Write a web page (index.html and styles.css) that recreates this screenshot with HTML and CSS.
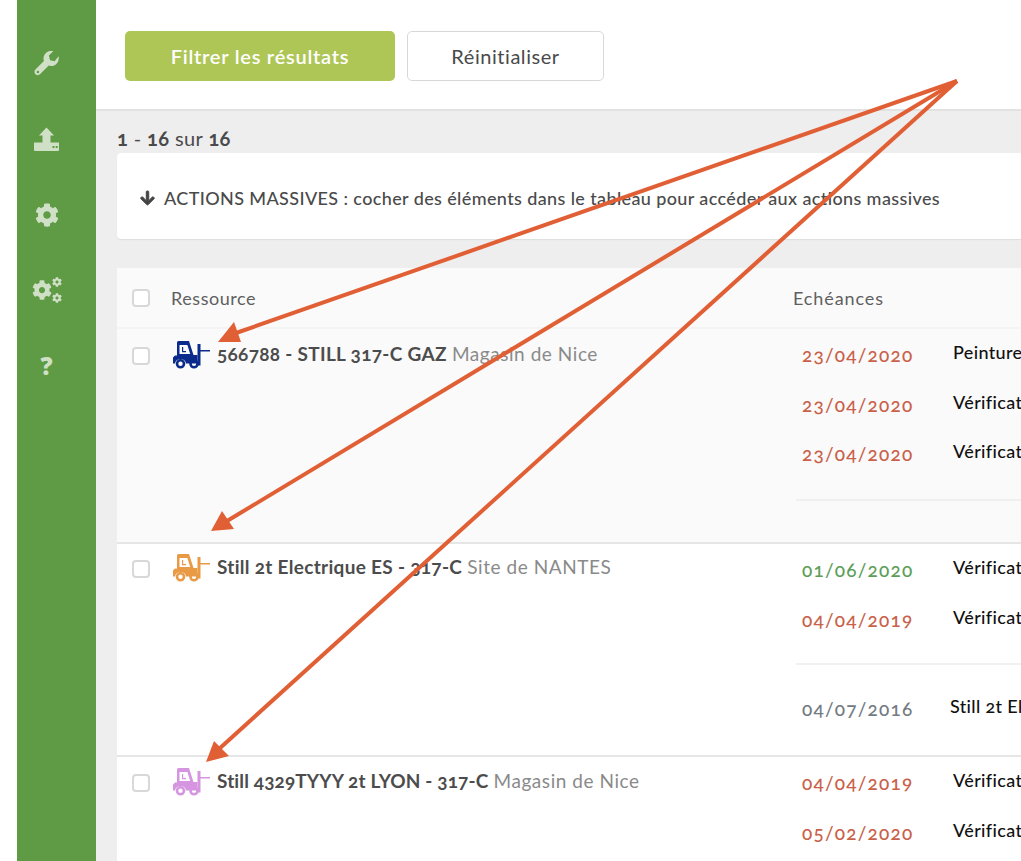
FILE: index.html
```html
<!DOCTYPE html>
<html lang="fr">
<head>
<meta charset="utf-8">
<title>Ressources</title>
<link rel="stylesheet" href="styles.css">
</head>
<body>
<svg class="defs" width="0" height="0" aria-hidden="true">
  <symbol id="cog" viewBox="0 0 512 512"><path d="M487.4 315.7l-42.6-24.6c4.3-23.2 4.3-47 0-70.2l42.6-24.6c4.9-2.8 7.1-8.6 5.5-14-11.1-35.6-30-67.8-54.7-94.6-3.8-4.1-10-5.1-14.8-2.3L380.8 110c-17.9-15.4-38.5-27.3-60.8-35.1V25.8c0-5.6-3.9-10.5-9.4-11.7-36.7-8.2-74.3-7.8-109.2 0-5.5 1.2-9.4 6.1-9.4 11.7V75c-22.2 7.9-42.8 19.8-60.8 35.1L88.7 85.5c-4.9-2.8-11-1.9-14.8 2.3-24.7 26.7-43.6 58.9-54.7 94.6-1.7 5.4.6 11.2 5.5 14L67.3 221c-4.3 23.2-4.3 47 0 70.2l-42.6 24.6c-4.9 2.8-7.1 8.6-5.5 14 11.1 35.6 30 67.8 54.7 94.6 3.8 4.1 10 5.1 14.8 2.3l42.6-24.6c17.9 15.4 38.5 27.3 60.8 35.1v49.2c0 5.6 3.9 10.5 9.4 11.7 36.7 8.2 74.3 7.8 109.2 0 5.5-1.2 9.4-6.1 9.4-11.7v-49.2c22.2-7.9 42.8-19.8 60.8-35.1l42.6 24.6c4.9 2.8 11 1.9 14.8-2.3 24.7-26.7 43.6-58.9 54.7-94.6 1.5-5.5-.7-11.3-5.6-14.1zM256 336c-44.1 0-80-35.9-80-80s35.9-80 80-80 80 35.9 80 80-35.9 80-80 80z"/></symbol>
  <symbol id="forklift" viewBox="0 0 37 28">
    <path fill-rule="evenodd" d="M4 1.500Q4 0 5.500 0H16L20.500 14H24.500V22.500H13A5.600 5.600 0 0 0 2 22.500H0V16.500L2 14.500H4ZM6.500 4V13H17.200L14.400 4Z"/>
    <path d="M9 6H10.200V10H13V11.200H9Z"/>
    <path d="M24.500 3H27.500V9H37V10.400H27.500V24.500H24.500Z"/>
    <path fill-rule="evenodd" d="M7.500 18A4.800 4.800 0 1 1 7.500 27.600A4.800 4.800 0 1 1 7.500 18ZM7.500 20.600A2.200 2.200 0 1 0 7.500 25A2.200 2.200 0 1 0 7.500 20.600Z"/>
    <path fill-rule="evenodd" d="M21 18A4.800 4.800 0 1 1 21 27.600A4.800 4.800 0 1 1 21 18ZM21 20.600A2.200 2.200 0 1 0 21 25A2.200 2.200 0 1 0 21 20.600Z"/>
  </symbol>
</svg>

<div class="page">
  <nav class="sidebar">
    <a class="nav-item">
      <svg class="nav-icon" viewBox="0 0 26 26"><path d="M25.500 5.500c.8 3.300-.3 6.500-2.900 8.500-2.300 1.700-5 2-7.300 1.200L6.500 24c-1.500 1.500-3.700 1.500-5 .2-1.400-1.400-1.400-3.600 0-5l8.800-8.800c-.8-2.400-.5-5.100 1.200-7.400C13.500.4 16.700-.6 20 .2L15.500 4.700l1.200 4.800 4.800 1.200Z"/><circle cx="4" cy="21.800" r="1.300" fill="#5f9b45"/></svg>
    </a>
    <a class="nav-item">
      <svg class="nav-icon" viewBox="0 0 25 24"><path d="M12.500 0 20 8h-3.500v8h-8V8H5Z"/><path fill-rule="evenodd" d="M0 15h25v7.500a1 1 0 0 1-1 1H1a1 1 0 0 1-1-1ZM18.500 18.500v2h2v-2ZM21.700 18.500v2h2v-2Z"/></svg>
    </a>
    <a class="nav-item"><svg class="nav-icon cog-one"><use href="#cog"/></svg></a>
    <a class="nav-item nav-cogs">
      <svg class="nav-icon cog-big"><use href="#cog"/></svg>
      <span class="cog-stack">
        <svg class="cog-small"><use href="#cog"/></svg>
        <svg class="cog-small"><use href="#cog"/></svg>
      </span>
    </a>
    <a class="nav-item nav-help">?</a>
  </nav>

  <main class="main">
    <header class="toolbar">
      <button class="btn btn-primary">Filtrer les résultats</button>
      <button class="btn btn-ghost">Réinitialiser</button>
    </header>

    <section class="content">
      <p class="count"><b>1</b> - <b>16</b> sur <b>16</b></p>

      <div class="mass-card">
        <svg class="down" viewBox="0 0 448 512"><path d="M413.1 222.500l22.200 22.200c9.400 9.400 9.400 24.600 0 33.900L241 473c-9.400 9.400-24.600 9.400-33.900 0L12.700 278.600c-9.400-9.400-9.400-24.600 0-33.900l22.200-22.200c9.500-9.500 25-9.300 34.300.4L184 343.400V56c0-13.300 10.700-24 24-24h32c13.300 0 24 10.700 24 24v287.400l114.800-120.500c9.300-9.800 24.800-10 34.300-.4z"/></svg>
        <span>ACTIONS MASSIVES : cocher des éléments dans le tableau pour accéder aux actions massives</span>
      </div>

      <div class="table">
        <div class="thead">
          <span class="check"></span>
          <span class="th th-res">Ressource</span>
          <span class="th th-due">Echéances</span>
        </div>

        <div class="row row-tint row-one">
          <div class="res">
            <span class="check"></span>
            <svg class="lift lift-blue"><use href="#forklift"/></svg>
            <span class="res-name"><b>566788 - STILL 317-C GAZ</b> <i>Magasin de Nice</i></span>
          </div>
          <div class="dues">
            <div class="due"><span class="date late">23/04/2020</span><span class="label">Peinture</span></div>
            <div class="due"><span class="date late">23/04/2020</span><span class="label">Vérification</span></div>
            <div class="due"><span class="date late">23/04/2020</span><span class="label">Vérification</span></div>
            <div class="sep"></div>
          </div>
        </div>

        <div class="row row-two">
          <div class="res">
            <span class="check"></span>
            <svg class="lift lift-orange"><use href="#forklift"/></svg>
            <span class="res-name"><b>Still 2t Electrique ES - 317-C</b> <i>Site de NANTES</i></span>
          </div>
          <div class="dues">
            <div class="due"><span class="date ok">01/06/2020</span><span class="label">Vérification</span></div>
            <div class="due"><span class="date late">04/04/2019</span><span class="label">Vérification</span></div>
            <div class="sep"></div>
            <div class="due due-old"><span class="date old">04/07/2016</span><span class="label">Still 2t Electrique</span></div>
          </div>
        </div>

        <div class="row row-three">
          <div class="res">
            <span class="check"></span>
            <svg class="lift lift-pink"><use href="#forklift"/></svg>
            <span class="res-name"><b>Still 4329TYYY 2t LYON - 317-C</b> <i>Magasin de Nice</i></span>
          </div>
          <div class="dues">
            <div class="due"><span class="date late">04/04/2019</span><span class="label">Vérification</span></div>
            <div class="due"><span class="date late">05/02/2020</span><span class="label">Vérification</span></div>
          </div>
        </div>
      </div>
    </section>
  </main>
</div>

<svg class="arrows" viewBox="0 0 1021 861" aria-hidden="true">
  <g fill="none" stroke="#e15f35" stroke-width="4">
    <path d="M957 81 236 333"/>
    <path d="M957 81 227 521"/>
    <path d="M957 81 219 749"/>
  </g>
  <g fill="#e15f35">
    <path d="M218 342 234 322 241 342Z"/>
    <path d="M211 531 222 511 234 529Z"/>
    <path d="M206 762 214 741 229 756Z"/>
  </g>
</svg>
</body>
</html>
```

FILE: styles.css
```css
* { box-sizing: border-box; }

html, body {
  margin: 0;
  height: 100%;
  overflow: hidden;
}

body {
  background: #fff;
  font-family: "Lato", "Open Sans", sans-serif;
  color: #4a4a4a;
  font-feature-settings: "onum" 1;
}

.defs { position: absolute; }

.page {
  display: flex;
  height: 861px;
  padding-left: 17px;
  overflow: hidden;
}

/* Sidebar */
.sidebar {
  flex: 0 0 79px;
  background: #5f9b45;
  display: flex;
  flex-direction: column;
  align-items: center;
  padding: 26px 20px 0 0;
}

.nav-item {
  height: 75.500px;
  flex: none;
  width: 100%;
  display: flex;
  align-items: center;
  justify-content: center;
  color: #cfe0c6;
}

.nav-icon {
  flex: none;
  width: 25px;
  height: 25px;
  fill: #cfe0c6;
}

.cog-one { width: 24px; height: 24px; }

.cog-big { width: 20px; height: 20px; }
.cog-stack { display: flex; flex-direction: column; gap: 6px; flex: none; }
.cog-small { width: 10px; height: 10px; fill: #cfe0c6; display: block; }

.nav-help {
  font-family: "Open Sans", sans-serif;
  font-weight: 800;
  font-size: 24px;
}

/* Main */
.main {
  flex: 1;
  min-width: 0;
  display: flex;
  flex-direction: column;
}

.toolbar {
  height: 111px;
  flex: none;
  background: #fff;
  border-bottom: 2px solid #e2e2e2;
  padding: 31px 0 0 29px;
  display: flex;
  align-items: flex-start;
  gap: 12px;
}

.btn {
  height: 50px;
  font-family: inherit;
  font-size: 20px;
  border-radius: 5px;
  letter-spacing: .55px;
}

.btn-primary {
  width: 270px;
  background: #aec656;
  border: 0;
  color: #fff;
  font-weight: 600;
  letter-spacing: .75px;
}

.btn-ghost {
  width: 197px;
  background: #fff;
  border: 1px solid #d8d8d8;
  color: #4a4a4a;
}

.content {
  flex: 1;
  background: #eee;
  padding: 14px 0 0 21px;
  overflow: hidden;
}

.count {
  margin: 0;
  height: 28px;
  font-size: 20px;
  line-height: 27px;
  letter-spacing: .4px;
}

.mass-card {
  width: 1000px;
  height: 86px;
  background: #fff;
  border-radius: 4px;
  box-shadow: 0 1px 1px #ddd;
  display: flex;
  align-items: center;
  padding: 4px 0 0 23px;
  gap: 9px;
  font-size: 18px;
  font-weight: 500;
  letter-spacing: .38px;
}

.down {
  width: 15px;
  height: 16px;
  fill: #444;
  stroke: #444;
  stroke-width: 30;
}

/* Table */
.table {
  margin-top: 29px;
  width: 1000px;
  background: #fff;
}

.thead {
  height: 61px;
  background: #fafafa;
  border-bottom: 2px solid #f4f4f4;
  display: flex;
  align-items: center;
  padding-left: 15px;
}

.th {
  font-size: 18px;
  letter-spacing: .55px;
  color: #5f5f5f;
  padding-top: 1px;
}

.th-res { width: 622px; margin-left: 21px; }
.th-due { letter-spacing: .9px; }

.check {
  flex: none;
  width: 18px;
  height: 18px;
  border: 2px solid #d8d8d8;
  border-radius: 4px;
  background: #fff;
}

.row {
  display: flex;
  border-bottom: 2px solid #e6e6e6;
}

.row-tint { background: #fafafa; }
.row-one { height: 215px; }
.row-two { height: 213px; }
.row-three { height: 120px; border-bottom: 0; }

.res {
  width: 679px;
  flex: none;
  display: flex;
  align-items: flex-start;
  padding: 17px 0 0 15px;
}

.row-one .res { padding-top: 18px; }
.row-two .res { padding-top: 16px; }

.lift {
  flex: none;
  width: 37px;
  height: 28px;
  margin: -6px 7px 0 23px;
}

.lift-blue { fill: #0a2a8c; }
.lift-orange { fill: #e99a45; }
.lift-pink { fill: #d695e0; }

.res-name {
  font-size: 19px;
  line-height: 17px;
  letter-spacing: .3px;
  white-space: nowrap;
  margin-top: -2px;
}

.res-name b { font-weight: 700; color: #4c4c4c; }
.res-name i { font-style: normal; color: #8a8a8a; letter-spacing: .55px; }
.row-three .res-name b { letter-spacing: .13px; }

.dues {
  flex: 1;
  padding: 9px 0 0 0;
  overflow: hidden;
}

.due {
  height: 49.500px;
  display: flex;
  white-space: nowrap;
  padding-left: 6px;
}

.date {
  width: 151px;
  flex: none;
  font-size: 19px;
  letter-spacing: 1.200px;
  font-weight: 500;
  padding-top: 5px;
}

.late { color: #c9614a; }
.ok { color: #5c9e58; }
.old { color: #737b82; }

.label {
  font-size: 18px;
  font-weight: 500;
  color: #111;
  letter-spacing: .35px;
  padding-top: 3px;
}

.sep {
  height: 2px;
  background: #f0f0f0;
  margin: 12px 0 22px;
}

.row-two .sep { margin: 11px 0 27px; }
.due-old .label { margin-left: -3px; }

/* Annotation arrows */
.arrows {
  position: absolute;
  left: 0;
  top: 0;
  width: 1021px;
  height: 861px;
  pointer-events: none;
}
```
